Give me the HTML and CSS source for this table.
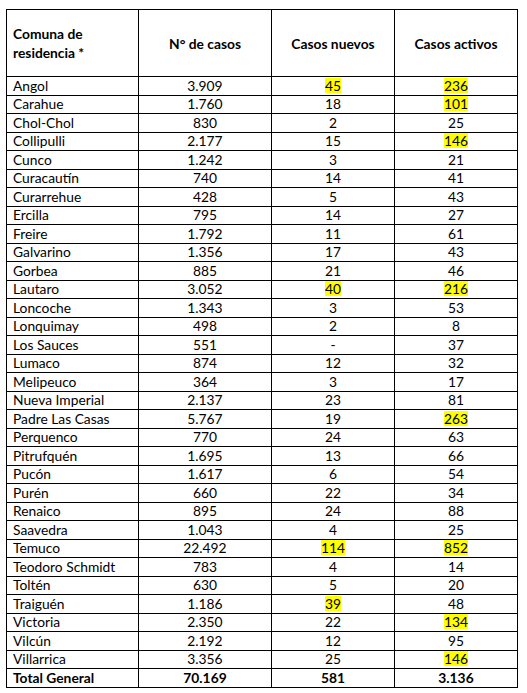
FILE: index.html
```html
<!DOCTYPE html>
<html lang="es">
<head>
<meta charset="utf-8">
<title>Casos por comuna</title>
<link rel="stylesheet" href="styles.css">
</head>
<body>
<table class="casos">
<colgroup>
<col class="c1"><col class="c2"><col class="c3"><col class="c4">
</colgroup>
<thead>
<tr class="head">
<th class="left">Comuna de<br>residencia *</th>
<th>N° de casos</th>
<th>Casos nuevos</th>
<th>Casos activos</th>
</tr>
</thead>
<tbody>
<tr><td class="name">Angol</td><td>3.909</td><td><span class="hl">45</span></td><td><span class="hl">236</span></td></tr>
<tr><td class="name">Carahue</td><td>1.760</td><td>18</td><td><span class="hl">101</span></td></tr>
<tr><td class="name">Chol-Chol</td><td>830</td><td>2</td><td>25</td></tr>
<tr><td class="name">Collipulli</td><td>2.177</td><td>15</td><td><span class="hl">146</span></td></tr>
<tr><td class="name">Cunco</td><td>1.242</td><td>3</td><td>21</td></tr>
<tr><td class="name">Curacautín</td><td>740</td><td>14</td><td>41</td></tr>
<tr><td class="name">Curarrehue</td><td>428</td><td>5</td><td>43</td></tr>
<tr><td class="name">Ercilla</td><td>795</td><td>14</td><td>27</td></tr>
<tr><td class="name">Freire</td><td>1.792</td><td>11</td><td>61</td></tr>
<tr><td class="name">Galvarino</td><td>1.356</td><td>17</td><td>43</td></tr>
<tr><td class="name">Gorbea</td><td>885</td><td>21</td><td>46</td></tr>
<tr><td class="name">Lautaro</td><td>3.052</td><td><span class="hl">40</span></td><td><span class="hl">216</span></td></tr>
<tr><td class="name">Loncoche</td><td>1.343</td><td>3</td><td>53</td></tr>
<tr><td class="name">Lonquimay</td><td>498</td><td>2</td><td>8</td></tr>
<tr><td class="name">Los Sauces</td><td>551</td><td>-</td><td>37</td></tr>
<tr><td class="name">Lumaco</td><td>874</td><td>12</td><td>32</td></tr>
<tr><td class="name">Melipeuco</td><td>364</td><td>3</td><td>17</td></tr>
<tr><td class="name">Nueva Imperial</td><td>2.137</td><td>23</td><td>81</td></tr>
<tr><td class="name">Padre Las Casas</td><td>5.767</td><td>19</td><td><span class="hl">263</span></td></tr>
<tr><td class="name">Perquenco</td><td>770</td><td>24</td><td>63</td></tr>
<tr><td class="name">Pitrufquén</td><td>1.695</td><td>13</td><td>66</td></tr>
<tr><td class="name">Pucón</td><td>1.617</td><td>6</td><td>54</td></tr>
<tr><td class="name">Purén</td><td>660</td><td>22</td><td>34</td></tr>
<tr><td class="name">Renaico</td><td>895</td><td>24</td><td>88</td></tr>
<tr><td class="name">Saavedra</td><td>1.043</td><td>4</td><td>25</td></tr>
<tr><td class="name">Temuco</td><td>22.492</td><td><span class="hl">114</span></td><td><span class="hl">852</span></td></tr>
<tr><td class="name">Teodoro Schmidt</td><td>783</td><td>4</td><td>14</td></tr>
<tr><td class="name">Toltén</td><td>630</td><td>5</td><td>20</td></tr>
<tr><td class="name">Traiguén</td><td>1.186</td><td><span class="hl">39</span></td><td>48</td></tr>
<tr><td class="name">Victoria</td><td>2.350</td><td>22</td><td><span class="hl">134</span></td></tr>
<tr><td class="name">Vilcún</td><td>2.192</td><td>12</td><td>95</td></tr>
<tr><td class="name">Villarrica</td><td>3.356</td><td>25</td><td><span class="hl">146</span></td></tr>
<tr class="total"><td class="name">Total General</td><td>70.169</td><td>581</td><td>3.136</td></tr>
</tbody>
</table>
</body>
</html>
```

FILE: styles.css
```css
html, body {
  margin: 0;
  padding: 0;
  background: #ffffff;
}
body {
  padding: 9px 0 0 6px;
  font-family: Lato, "Open Sans", "Liberation Sans", sans-serif;
  font-size: 13.8px;
  color: #000000;
}
.casos {
  border-collapse: collapse;
  table-layout: fixed;
  width: 511px;
}
.c1 { width: 132px; }
.c2 { width: 133px; }
.c3 { width: 123px; }
.c4 { width: 123px; }
.casos th,
.casos td {
  border: 1px solid #000000;
  padding: 0 6px;
  text-align: center;
  vertical-align: middle;
  white-space: nowrap;
  line-height: 16px;
}
.casos th {
  font-weight: bold;
  height: 66px;
  line-height: 19px;
}
.casos th.left,
.casos td.name {
  text-align: left;
}
.casos td {
  height: 17.5px;
}
.hl {
  background: #ffff00;
  display: inline-block;
  line-height: 15px;
}
.total td {
  font-weight: bold;
}
```
